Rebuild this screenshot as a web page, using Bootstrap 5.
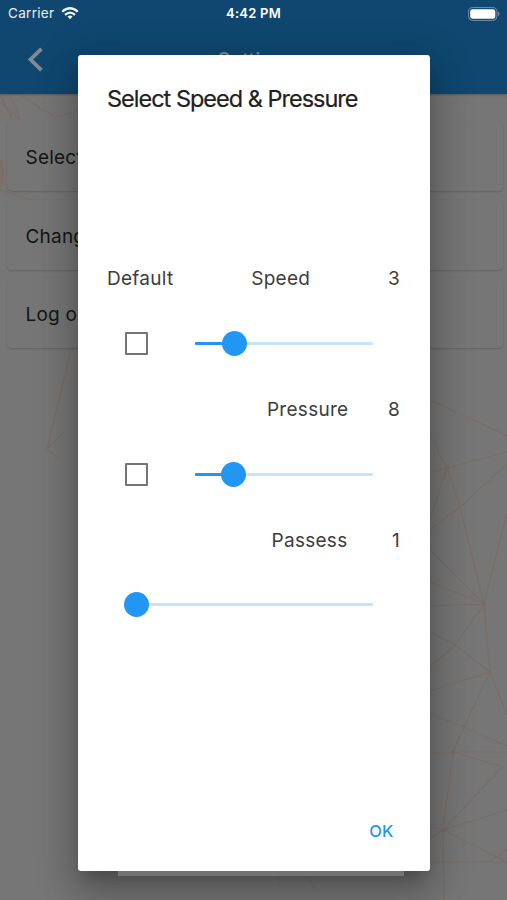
<!DOCTYPE html>
<html lang="en">
<head>
<meta charset="utf-8">
<meta name="viewport" content="width=device-width, initial-scale=1">
<title>Settings</title>
<link href="https://cdn.jsdelivr.net/npm/bootstrap@5.3.0/dist/css/bootstrap.min.css" rel="stylesheet">
<style>
body{font-family:Inter,"Liberation Sans",sans-serif;background:#767676;color:#151515}
.screen{height:900px}
.topbar{height:94px;background:#0f4770;box-shadow:0 1px 2px rgba(0,0,0,.25)}
.status{height:27px;padding:0 7px 0 8px;color:#e9eff4;font-size:13px}
.clock{font-size:13px;letter-spacing:.25px;color:#fff;padding-right:1px}
.side{width:110px}
.carrier{font-size:13.5px;letter-spacing:.3px;margin-right:7px}
.appbar{height:65px;padding-left:27px;color:#86898b}
.page-name{font-size:20px;line-height:24px;padding-right:38px}
.mesh{left:0;top:94px;width:507px;height:806px}
.tiles{padding:27px 4px 0 7px;gap:8.5px}
.tile{height:70px;padding:5px 0 0 18.5px;border-radius:5px;background:rgba(118,118,118,.55);box-shadow:0 1px 2px rgba(0,0,0,.16);font-size:19px;letter-spacing:.2px}
.layer{padding:54.5px 77px 0 78px}
.dialog{height:816px;border-radius:3px;background:#fff;padding:28px 30px 20px 29px;box-shadow:0 12px 15px -7px rgba(0,0,0,.2),0 24px 36px 3px rgba(0,0,0,.16),0 9px 40px 8px rgba(0,0,0,.14)}
.dialog h1{font-size:23.5px;line-height:32px;letter-spacing:-1px;color:#212121;white-space:nowrap;-webkit-text-stroke:.2px #212121}
.controls{margin-top:132.5px;font-size:19px;letter-spacing:.28px;color:#3d3d3d}
.controls>div{height:65.33px}
.name-wide{margin-right:39.5px}
.name-last{margin-right:44.5px}
.tick{width:23px;height:23px;border:2px solid #757575;border-radius:1px;margin-left:18px}
.rail{height:3px;background:#c8e3fc;border-radius:1px;margin-left:47px;margin-right:27.5px}
.rail-full{margin-left:29px}
.rail-fill{height:3px;background:#2196f3;border-radius:1px}
.knob{width:25px;height:25px;background:#2196f3;margin:0 -12.5px;flex:none}
.track-row{padding-bottom:3px}
.ok{font-size:16.5px;line-height:24px;letter-spacing:.1px;color:#2196f3;font-weight:500;padding:8px 6.5px}
.under{width:286px;height:5px;background:#747474;margin-left:40px}
</style>
<script src="https://cdn.jsdelivr.net/npm/bootstrap@5.3.0/dist/js/bootstrap.bundle.min.js"></script>
</head>
<body>
<div class="screen position-relative overflow-hidden">
  <svg class="mesh position-absolute" viewBox="0 94 507 806" fill="none" stroke="#7b6c62" stroke-width="1.2" opacity=".75" aria-hidden="true">
    <path d="M430 400L507 436M430 435L447 468L460 507L484 604L490 672L507 715M430 472L447 468L507 452M447 468L430 520M430 530L460 507L507 464M507 513L484 604M430 550L484 604M430 582L484 604L430 606M484 604L455 645L430 667M430 632L455 645L490 672L430 691M490 672L464 727L453 752L443 830L444 900M430 714L464 727L507 746M453 752H507M453 752L502 767L443 830L507 810M430 753H453M430 826L443 830L507 862M430 862H507M487 863L507 850M430 839L443 830M0 94L12 119M0 102L20 120L10 94M20 95L55 117L78 111M0 190L36 201M47 449L71 350M47 449L63 433M47 449L58 458M276 870L280 887M305 872L318 894"/>
    <path d="M0 160Q5 172 0 187" stroke="#8c6552" stroke-width="3" opacity=".7"/>
    <g fill="#7e6356" stroke="none" opacity=".7"><circle cx="447" cy="468" r="2"/><circle cx="484" cy="604" r="2"/><circle cx="490" cy="672" r="1.5"/><circle cx="453" cy="752" r="1.5"/><circle cx="443" cy="830" r="1.5"/></g>
  </svg>
  <header class="topbar position-relative">
    <div class="status d-flex align-items-center justify-content-between">
      <div class="side d-flex align-items-center"><span class="carrier">Carrier</span>
        <svg width="18" height="13" viewBox="0 0 18 13" fill="none" stroke="#f2f6f9" stroke-width="2.2" aria-hidden="true"><path d="M1.2 4.7Q9-2.2 16.8 4.7M4 7.8Q9 3.4 14 7.8"/><path d="M9 12.2L6.4 9.5Q9 7.3 11.6 9.5Z" fill="#f2f6f9" stroke="none"/></svg>
      </div>
      <span class="clock fw-semibold">4:42 PM</span>
      <div class="side d-flex justify-content-end">
        <svg width="32" height="14" viewBox="0 0 32 14" aria-hidden="true"><rect x=".6" y=".6" width="28.3" height="12.8" rx="4" fill="none" stroke="#7890a5"/><rect x="2.2" y="2.2" width="25.1" height="9.6" rx="2.4" fill="#fff"/><path d="M30 4.5Q33 7 30 9.5Z" fill="#7890a5"/></svg>
      </div>
    </div>
    <div class="appbar d-flex align-items-center">
      <svg width="17" height="25" viewBox="0 0 17 25" fill="none" stroke="currentColor" stroke-width="3.8" aria-hidden="true"><path d="M14.4 1.8L3.5 12.5L14.4 23.2"/></svg>
      <span class="page-name flex-fill text-center fw-medium">Settings</span>
    </div>
  </header>
  <main class="tiles d-flex flex-column position-relative">
    <div class="tile d-flex align-items-center">Select Speed</div>
    <div class="tile d-flex align-items-center">Change Password</div>
    <div class="tile d-flex align-items-center">Log out</div>
  </main>
  <div class="layer position-absolute top-0 start-0 w-100">
    <section class="dialog d-flex flex-column" role="dialog" aria-label="Select Speed &amp; Pressure">
      <h1 class="m-0 fw-normal">Select Speed &amp; Pressure</h1>
      <div class="controls">
        <div class="d-flex align-items-center justify-content-between"><span>Default</span><span>Speed</span><span>3</span></div>
        <div class="track-row d-flex align-items-center"><span class="tick"></span><div class="rail flex-fill d-flex align-items-center"><div class="rail-fill" style="width:22%"></div><span class="knob rounded-circle"></span></div></div>
        <div class="d-flex align-items-center justify-content-end"><span class="name-wide">Pressure</span><span>8</span></div>
        <div class="track-row d-flex align-items-center"><span class="tick"></span><div class="rail flex-fill d-flex align-items-center"><div class="rail-fill" style="width:21.7%"></div><span class="knob rounded-circle"></span></div></div>
        <div class="d-flex align-items-center justify-content-end"><span class="name-last">Passess</span><span>1</span></div>
        <div class="track-row d-flex align-items-center"><div class="rail rail-full flex-fill d-flex align-items-center"><div class="rail-fill" style="width:0%"></div><span class="knob rounded-circle"></span></div></div>
      </div>
      <button type="button" class="ok btn border-0 mt-auto align-self-end">OK</button>
    </section>
    <div class="under"></div>
  </div>
</div>
</body>
</html>
